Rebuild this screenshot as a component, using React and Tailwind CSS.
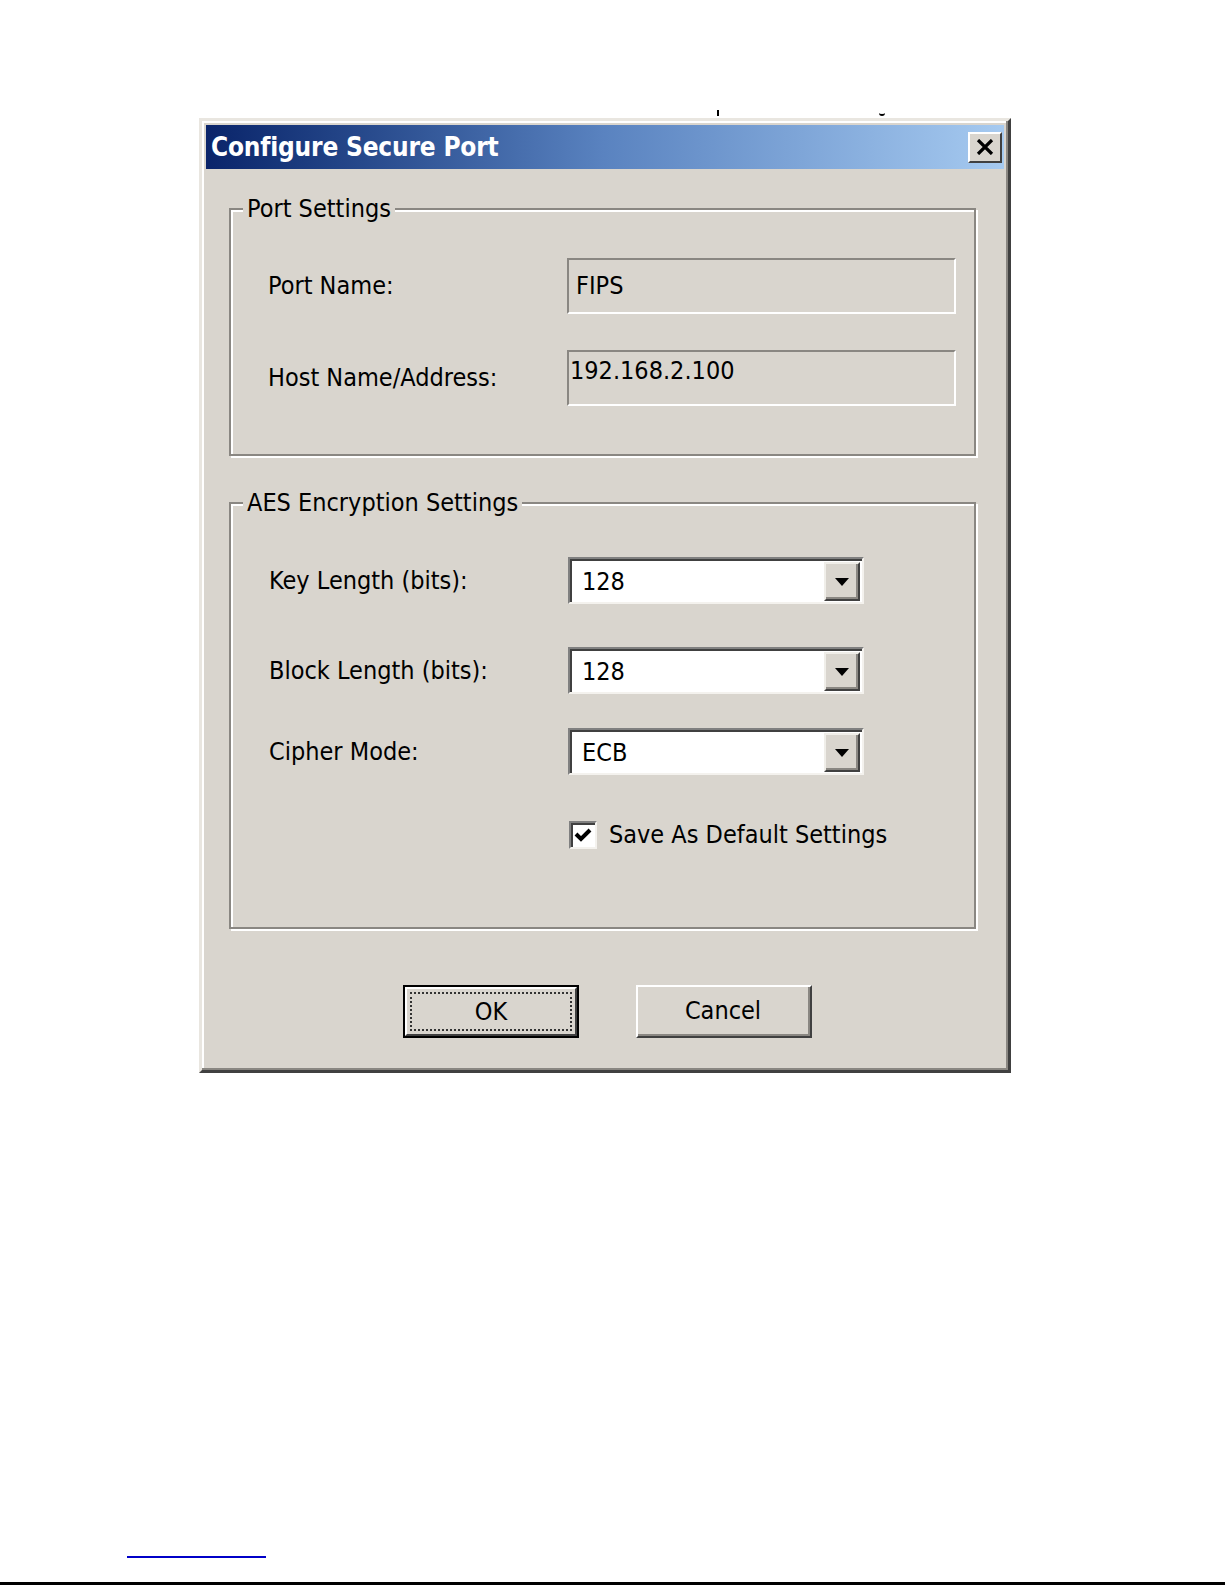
import React, { useState } from "react";

const FONT = { fontFamily: '"DejaVu Sans Condensed", "DejaVu Sans", Tahoma, sans-serif' };

const Field = ({ value, top }) => (
  <div
    className={`w-[389px] h-[56px] bg-[#d9d5ce] border-t-2 border-l-2 border-t-[#8a8782] border-l-[#8a8782] border-b-2 border-r-2 border-b-white border-r-white flex ${
      top ? "items-start pt-[4px] pl-[1px]" : "items-center pl-[7px]"
    }`}
  >
    {value}
  </div>
);

const Combo = ({ value }) => (
  <div className="w-[296px] h-[47px] bg-white border-t-2 border-l-2 border-t-[#808080] border-l-[#808080] border-b-2 border-r-2 border-b-[#f4f2ee] border-r-[#f4f2ee] shadow-[inset_2px_2px_0_#404040] flex items-center">
    <span className="flex-1 pl-[12px] pt-[2px]">{value}</span>
    <div className="w-[36px] h-[39px] mr-[2px] mt-[2px] bg-[#d9d5ce] border-t-2 border-l-2 border-t-[#f0eee9] border-l-[#f0eee9] border-b-2 border-r-2 border-b-[#404040] border-r-[#404040] shadow-[inset_-2px_-2px_0_#8a8782] flex items-center justify-center">
      <svg width="14" height="8" viewBox="0 0 14 8">
        <polygon points="0,0 14,0 7,8" fill="#000" />
      </svg>
    </div>
  </div>
);

const Row = ({ label, children, className = "" }) => (
  <div className={`flex items-center ${className}`}>
    <div className="w-[300px] pl-[1px]">{label}</div>
    {children}
  </div>
);

const Button = ({ children, isDefault }) => (
  <button
    className={`w-[176px] h-[53px] bg-[#d9d5ce] flex items-center justify-center ${
      isDefault
        ? "border-2 border-black"
        : "border-t-2 border-l-2 border-t-white border-l-white border-b-2 border-r-2 border-b-[#404040] border-r-[#404040]"
    }`}
  >
    {isDefault ? (
      <div className="w-full h-full border-t-2 border-l-2 border-t-white border-l-white border-b-2 border-r-2 border-b-[#404040] border-r-[#404040] p-[3px]">
        <div className="w-full h-full border-2 border-dotted border-[#333] flex items-center justify-center">
          {children}
        </div>
      </div>
    ) : (
      <div className="w-full h-full border-b-2 border-r-2 border-b-[#8a8782] border-r-[#8a8782] flex items-center justify-center">
        {children}
      </div>
    )}
  </button>
);

export default function App() {
  const [saveDefault, setSaveDefault] = useState(true);

  return (
    <div className="w-[1225px] h-[1585px] bg-white relative text-black text-[25px] leading-[30px]" style={FONT}>
      {/* clipped descenders of the line above the picture */}
      <div className="h-[110px]" />
      <div className="h-[8px] flex">
        <div className="ml-[717px] w-[2px] h-[6px] bg-black" />
        <div className="ml-[160px] w-[6px] h-[3px] mt-[3px] border-b-2 border-black rounded-b-full" />
      </div>

      {/* dialog */}
      <div className="ml-[199px] w-[812px] h-[955px] bg-[#d9d5ce] border-t-[3px] border-l-[3px] border-t-[#e9e6e0] border-l-[#e9e6e0] border-b-[3px] border-r-[3px] border-b-[#404040] border-r-[#404040] shadow-[inset_-2px_-2px_0_#8a8782,inset_2px_2px_0_#fff] p-[4px] flex flex-col">
        {/* title bar */}
        <div className="h-[44px] bg-gradient-to-r from-[#0a246a] via-[#5a83c0] to-[#a6caf0] flex items-center pl-[5px] pr-[2px]">
          <span className="flex-1 text-white font-bold text-[26px] tracking-[-0.2px]">Configure Secure Port</span>
          <div className="w-[34px] h-[31px] bg-[#d9d5ce] border-t-2 border-l-2 border-t-white border-l-white border-b-2 border-r-2 border-b-[#404040] border-r-[#404040] flex items-center justify-center">
            <svg width="18" height="16" viewBox="0 0 18 16">
              <path d="M2 1 L16 15 M16 1 L2 15" stroke="#000" strokeWidth="3.2" />
            </svg>
          </div>
        </div>

        {/* Port Settings */}
        <fieldset className="ml-[23px] mt-[25px] w-[747px] border-2 border-[#8a8782] shadow-[inset_2px_2px_0_#fff,2px_2px_0_#fff] pl-[12px] pr-[18px] pb-[48px]">
          <legend className="px-[4px] bg-[#d9d5ce]">Port Settings</legend>
          <div className="pl-[24px] pt-[34px] flex flex-col gap-[36px]">
            <Row label="Port Name:">
              <Field value="FIPS" />
            </Row>
            <Row label="Host Name/Address:">
              <Field value="192.168.2.100" top />
            </Row>
          </div>
        </fieldset>

        {/* AES Encryption Settings */}
        <fieldset className="ml-[23px] mt-[32px] w-[747px] border-2 border-[#8a8782] shadow-[inset_2px_2px_0_#fff,2px_2px_0_#fff] pl-[12px] pr-[18px] pb-[77px]">
          <legend className="px-[4px] bg-[#d9d5ce]">AES Encryption Settings</legend>
          <div className="pl-[25px] pt-[39px] flex flex-col">
            <Row label="Key Length (bits):">
              <Combo value="128" />
            </Row>
            <Row label="Block Length (bits):" className="mt-[43px]">
              <Combo value="128" />
            </Row>
            <Row label="Cipher Mode:" className="mt-[34px]">
              <Combo value="ECB" />
            </Row>
            <div className="mt-[45px] ml-[301px] flex items-center gap-[12px]">
              <button
                onClick={() => setSaveDefault(!saveDefault)}
                className="w-[28px] h-[28px] bg-white border-t-2 border-l-2 border-t-[#808080] border-l-[#808080] border-b-2 border-r-2 border-b-[#f4f2ee] border-r-[#f4f2ee] shadow-[inset_2px_2px_0_#404040] flex items-center justify-center"
              >
                {saveDefault && (
                  <svg width="18" height="16" viewBox="0 0 18 16">
                    <path d="M2 7 L7 12 L16 3" stroke="#000" strokeWidth="4" fill="none" />
                  </svg>
                )}
              </button>
              <span>Save As Default Settings</span>
            </div>
          </div>
        </fieldset>

        {/* buttons */}
        <div className="mt-[56px] flex gap-[57px] pl-[197px]">
          <Button isDefault>OK</Button>
          <Button>Cancel</Button>
        </div>
      </div>

      {/* page footer rules */}
      <div className="absolute left-[127px] top-[1556px] w-[139px] h-[2px] bg-[#0000c8]" />
      <div className="absolute left-0 bottom-0 w-full h-[3px] bg-black" />
    </div>
  );
}
